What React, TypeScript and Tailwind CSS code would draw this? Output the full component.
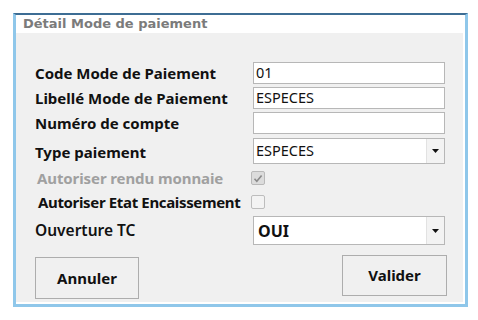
import React from 'react';

const labelCls = "w-[218px] shrink-0 text-[15px] font-bold leading-none text-[#111]";

const Arrow: React.FC = () => (
    <div className="w-[18px] h-full border-l border-[#e2e2e2] bg-[#f3f3f3] flex items-center justify-center">
        <svg width="7" height="4" viewBox="0 0 7 4"><path d="M0 0h7L3.5 4z" fill="#111" /></svg>
    </div>
);

const App: React.FC = () => {
    return (
        <div className="w-[478px] h-[320px] bg-white" style={{ fontFamily: '"Noto Sans", sans-serif' }}>
            <div className="ml-[13px] pt-[13px] w-[455px]">
                <div className="h-[294px] flex flex-col bg-white border-t-2 border-t-[#3d6d94] border-x-[3px] border-b-[3px] border-x-[#8fc7ea] border-b-[#8fc7ea]">
                    <div className="h-[18px] pl-[7px] flex items-center text-[13px] font-bold text-[#7b7b7b]" style={{ fontFamily: '"DejaVu Sans", sans-serif' }}>
                        Détail Mode de paiement
                    </div>
                    <div className="flex-1 mr-[2px] mb-[2px] bg-[#f0f0f0] pl-[19px] pt-[29px] flex flex-col">
                        <div className="flex items-center h-[22px]">
                            <span className={labelCls}>Code Mode de Paiement</span>
                            <div className="w-[192px] h-full bg-white border border-[#b7b7b7] pl-[2px] flex items-center text-[14.5px] text-[#111]">01</div>
                        </div>
                        <div className="flex items-center h-[22px] mt-[3px]">
                            <span className={labelCls}>Libellé Mode de Paiement</span>
                            <div className="w-[192px] h-full bg-white border border-[#b7b7b7] pl-[2px] flex items-center text-[14.5px] text-[#111]">ESPECES</div>
                        </div>
                        <div className="flex items-center h-[22px] mt-[3px]">
                            <span className={labelCls}>Numéro de compte</span>
                            <div className="w-[192px] h-full bg-white border border-[#b7b7b7]" />
                        </div>
                        <div className="flex items-center h-[26px] mt-[4px]">
                            <span className={`${labelCls} pt-[2px]`}>Type paiement</span>
                            <div className="w-[192px] h-full bg-white border border-[#b7b7b7] flex items-center">
                                <span className="flex-1 pl-[2px] text-[14.5px] text-[#111]">ESPECES</span>
                                <Arrow />
                            </div>
                        </div>
                        <div className="flex items-center h-[22px] mt-[3px]">
                            <span className="w-[216px] shrink-0 pl-[2px] text-[15px] font-bold leading-none tracking-[-0.1px] text-[#a0a0a0]">Autoriser rendu monnaie</span>
                            <div className="w-[14px] h-[14px] rounded-[2px] border border-[#b9b9b9] bg-[#dcdcdc] flex items-center justify-center">
                                <svg width="10" height="9" viewBox="0 0 10 9"><path d="M1.5 4.8l2.3 2.4L8.6 1.5" fill="none" stroke="#8a8a8a" strokeWidth="1.6" /></svg>
                            </div>
                        </div>
                        <div className="flex items-center h-[22px] mt-[2px]">
                            <span className="w-[216px] shrink-0 pl-[3px] text-[15px] font-bold leading-none tracking-[-0.35px] text-[#111] whitespace-nowrap">Autoriser Etat Encaissement</span>
                            <div className="w-[14px] h-[14px] rounded-[2px] border border-[#bdbdbd] bg-[#f3f3f3]" />
                        </div>
                        <div className="flex items-center h-[29px] mt-[3px]">
                            <span className="w-[218px] shrink-0 text-[15.5px] font-semibold leading-none text-[#111]">Ouverture TC</span>
                            <div className="w-[192px] h-full bg-white border border-[#b7b7b7] flex items-center">
                                <span className="flex-1 pl-[4px] text-[16px] font-bold text-[#111]">OUI</span>
                                <Arrow />
                            </div>
                        </div>
                        <div className="flex justify-between items-start pr-[16px] mt-[10px]">
                            <button className="mt-[2px] w-[104px] h-[42px] bg-[#f0f0f0] border border-[#adadad] text-[15px] font-bold text-[#111]">Annuler</button>
                            <button className="w-[105px] h-[41px] bg-[#f0f0f0] border border-[#adadad] text-[15px] font-bold text-[#111]">Valider</button>
                        </div>
                    </div>
                </div>
            </div>
        </div>
    );
};

export default App;
